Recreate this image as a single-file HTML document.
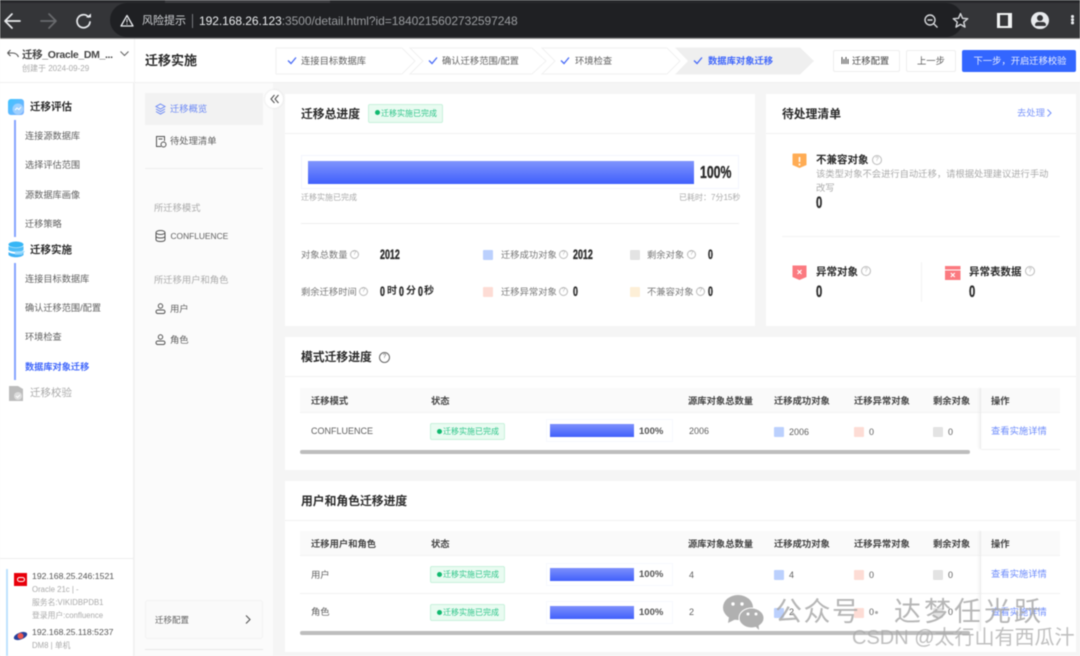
<!DOCTYPE html>
<html lang="zh"><head><meta charset="utf-8"><title>迁移实施</title>
<style>
*{box-sizing:border-box}
html,body{margin:0;padding:0;width:1080px;height:656px;overflow:hidden;background:#f5f5f5}
body{font-family:"Liberation Sans","Noto Sans CJK SC",sans-serif;font-size:9px;color:#5f5f5f}
#p{position:absolute;left:0;top:0;width:1080px;height:656px;overflow:hidden;background:#f5f5f5;filter:blur(.4px)}
.a,.t,svg.a{position:absolute}
.t{white-space:nowrap;line-height:14px}
.b{font-weight:700;color:#2a2a2a}
.g{color:#aaa}
.n{font-family:"Liberation Sans",sans-serif;font-weight:700;color:#2a2a2a;-webkit-text-stroke:.35px #2a2a2a;transform:scaleX(.66);transform-origin:0 50%}
.card{position:absolute;background:#fff}
.sq{position:absolute;width:10px;height:10px;border-radius:1px}
.q{position:absolute;width:9px;height:9px;border:1px solid #bbb;border-radius:50%;color:#aaa;font-size:6px;line-height:7px;text-align:center}
.tag{position:absolute;width:75px;height:17px;background:#e9fbf1;border:1px solid #c9f2dc;border-radius:2px;color:#2fc58a;font-size:8px;line-height:15px;padding-left:12px;white-space:nowrap}
.tag:before{content:"";position:absolute;left:6px;top:5px;width:5px;height:5px;border-radius:50%;background:#10b96f}
.bar{position:absolute;width:84px;height:13px;background:linear-gradient(#7d90fb,#4160fb)}
.fr{position:absolute;width:127px;height:23px;border:1px solid #f7f8fe}
.th{background:#fafafa;position:absolute;height:25px}
.h{font-size:9.300px;color:#444;font-weight:700}
</style></head><body><div id="p">

<!-- browser chrome -->
<div class="a" style="left:0;top:0;width:1080px;height:38px;background:#343538"></div>
<div class="a" style="left:0;top:0;width:1080px;height:3px;background:#27282b"></div>
<div class="a" style="left:165px;top:0;width:165px;height:3px;background:#3b3c3f"></div>
<div class="a" style="left:110px;top:3px;width:853px;height:34px;background:#1f2023;border-radius:17px"></div>
<div class="a" style="left:0;top:37.500px;width:1080px;height:1.200px;background:#9a9a9a"></div>
<svg class="a" style="left:0;top:3.500px" width="110" height="32" fill="none" stroke-linecap="round" stroke-linejoin="round">
<path d="M6 17h14M12 10l-7 7 7 7" stroke="#e8eaed" stroke-width="1.700"/>
<path d="M41 17h14M49 10l7 7-7 7" stroke="#686a6d" stroke-width="1.700"/>
<path d="M88.500 13a6.500 6.500 0 1 0 1.500 5" stroke="#e8eaed" stroke-width="1.700"/><path d="M86 13.500h5v-4z" fill="#e8eaed"/>
</svg>
<svg class="a" style="left:120px;top:13.500px" width="14" height="13" fill="none"><path d="M7 1.500 13 12H1z" stroke="#e8eaed" stroke-width="1.300" stroke-linejoin="round"/><path d="M7 5v3.500M7 9.500v1" stroke="#e8eaed"/></svg>
<div class="t" style="left:142px;top:13.500px;color:#d0d2d5;font-size:11px">风险提示</div>
<div class="a" style="left:192px;top:13.500px;width:1px;height:14px;background:#77797c"></div>
<div class="t" style="left:199px;top:13.500px;color:#eceef0;font-size:12px;letter-spacing:-.05px;font-weight:400">192.168.26.123<span style="color:#9a9c9f">:3500/detail.html?id=1840215602732597248</span></div>
<svg class="a" style="left:910px;top:7.500px" width="70" height="26" fill="none" stroke="#d5d7da" stroke-width="1.400" stroke-linejoin="round"><circle cx="20" cy="12" r="5"/><path d="M23.500 15.500l4 4M17.500 12h5"/><path d="M50.500 5.500l2 4.800 5.200.4-4 3.400 1.300 5-4.500-2.700-4.500 2.700 1.300-5-4-3.400 5.200-.4z"/></svg>
<div class="a" style="left:997px;top:13px;width:15px;height:15px;background:#f1f3f4"></div><div class="a" style="left:1000px;top:15px;width:8px;height:11px;background:#343538"></div>
<div class="a" style="left:1031px;top:11.500px;width:17.500px;height:17.500px;border-radius:50%;background:#e8eaed"></div>
<div class="a" style="left:1037px;top:14.500px;width:6px;height:6px;border-radius:50%;background:#343538"></div>
<div class="a" style="left:1034.500px;top:21.500px;width:11px;height:4px;border-radius:5px 5px 2px 2px;background:#343538"></div>
<div class="a" style="left:1071px;top:15px;width:2.500px;height:2.500px;border-radius:50%;background:#e8eaed;box-shadow:0 3.200px #e8eaed,0 6.400px #e8eaed"></div>

<!-- header -->
<div class="a" style="left:0;top:38.700px;width:1080px;height:44.300px;background:#fff;border-bottom:1px solid #f0f0f0"></div>
<!-- left sidebar -->
<div class="a" style="left:0;top:83px;width:134px;height:573px;background:#fff;border-right:1px solid #efefef"></div>
<div class="a" style="left:134px;top:39px;width:1px;height:44px;background:#f3f3f3"></div>
<!-- second nav -->
<div class="a" style="left:135px;top:83px;width:138px;height:573px;background:#fbfbfb"></div>

<svg class="a" style="left:6px;top:48px" width="14" height="12" fill="none" stroke="#555" stroke-width="1.100"><path d="M1.500 5h5c3 0 5 1.500 6 4M1.500 5l3-3M1.500 5l3 3"/></svg>
<div class="t b" style="left:22px;top:47.500px;font-size:10.500px;color:#444;letter-spacing:-.35px;line-height:14px">迁移_Oracle_DM_...</div>
<svg class="a" style="left:119px;top:50px" width="11" height="8" fill="none" stroke="#666" stroke-width="1.100"><path d="M1.500 1.500 5.500 5.500 9.500 1.500"/></svg>
<div class="t g" style="left:22px;top:62px;font-size:8px">创建于 2024-09-29</div>
<div class="t b" style="left:145px;top:53.500px;font-size:13px">迁移实施</div>

<!-- steps -->
<svg class="a" style="left:270px;top:46.500px" width="550" height="29">
<g fill="#fff" stroke="#f1f1f1"><path d="M6 1H132L145 14 132 27H6z"/><path d="M140 1H262L276 14 262 27H140L153 14z"/><path d="M272 1H397L410 14 397 27H272L285 14z"/></g>
<path d="M405 .5H530L544 14 530 27.500H405L418 14z" fill="#efefef"/>
<g fill="none" stroke="#4a6cf7" stroke-width="1.300"><path d="M18 13.500l3 3 5-6M159 13.500l3 3 5-6M291 13.500l3 3 5-6M424 13.500l3 3 5-6"/></g></svg>
<div class="t" style="left:301px;top:53.500px;font-size:9.300px">连接目标数据库</div>
<div class="t" style="left:442px;top:53.500px;font-size:9.300px">确认迁移范围/配置</div>
<div class="t" style="left:575px;top:53.500px;font-size:9.300px">环境检查</div>
<div class="t" style="left:708px;top:53.500px;font-size:9.300px;color:#3f66fb;font-weight:700">数据库对象迁移</div>

<div class="a" style="left:833px;top:50px;width:67px;height:21.500px;background:#fff;border:1px solid #eee;border-radius:2px"></div>
<svg class="a" style="left:841px;top:56px" width="9" height="9" stroke="#444" stroke-width="1" fill="none"><path d="M1 1v7M3 3v5M5 1v7M7 3v5"/></svg>
<div class="t" style="left:852px;top:53.500px;font-size:9.300px;color:#444">迁移配置</div>
<div class="a" style="left:906px;top:50px;width:50px;height:21.500px;background:#fff;border:1px solid #eee;border-radius:2px"></div>
<div class="t" style="left:917px;top:53.500px;font-size:9.300px">上一步</div>
<div class="a" style="left:962px;top:50px;width:114px;height:21.500px;background:#3366ff;border-radius:2px"></div>
<div class="t" style="left:973.500px;top:53.500px;font-size:9.300px;color:#e8eeff">下一步，开启迁移校验</div>

<!-- left tree -->
<div class="a" style="left:8px;top:99px;width:16px;height:16px;border-radius:3px;background:linear-gradient(135deg,#3ec3ff,#7fb0ff)"></div>
<svg class="a" style="left:8px;top:99px" width="16" height="16" fill="none"><circle cx="10" cy="10" r="5.500" fill="#b7dcff" opacity=".7"/><path d="M7 11l2-2 2 1.500 2-2.500" stroke="#fff"/></svg>
<div class="t b" style="left:30px;top:100px;font-size:10.500px">迁移评估</div>
<div class="a" style="left:14px;top:120px;width:1.500px;height:117px;background:#86a4ff"></div>
<div class="t" style="left:25px;top:129px;font-size:9.200px">连接源数据库</div>
<div class="t" style="left:25px;top:158px;font-size:9.200px">选择评估范围</div>
<div class="t" style="left:25px;top:188px;font-size:9.200px">源数据库画像</div>
<div class="t" style="left:25px;top:217px;font-size:9.200px">迁移策略</div>
<svg class="a" style="left:7px;top:241px" width="20" height="18"><ellipse cx="9" cy="3.500" rx="7.500" ry="3" fill="#35b6f6"/><path d="M1.500 5c3 2.500 12 2.500 15 0v4c-3 2.500-12 2.500-15 0z" fill="#4dbdf8"/><path d="M1.500 11c3 2.500 12 2.500 15 0v3c-3 3-12 3-15 0z" fill="#3db1f5"/><path d="M8 10h10l-3 4H8z" fill="#8fd6fc" opacity=".8"/></svg>
<div class="t b" style="left:30px;top:243px;font-size:10.500px">迁移实施</div>
<div class="a" style="left:14px;top:263px;width:1.500px;height:117px;background:#86a4ff"></div>
<div class="t" style="left:25px;top:272px;font-size:9.200px">连接目标数据库</div>
<div class="t" style="left:25px;top:301px;font-size:9.200px">确认迁移范围/配置</div>
<div class="t" style="left:25px;top:330px;font-size:9.200px">环境检查</div>
<div class="t" style="left:25px;top:360px;font-size:9.200px;color:#3f66fb;font-weight:700">数据库对象迁移</div>
<svg class="a" style="left:8px;top:385px" width="17" height="17"><path d="M1 1h9l5 3v12H1z" fill="#bcbcbc"/><circle cx="10" cy="11" r="4" fill="#dcdcdc"/><path d="M8 11l1.500 1.500L12 10" stroke="#fff" fill="none"/></svg>
<div class="t" style="left:30px;top:386px;font-size:10.500px;color:#aaa">迁移校验</div>

<div class="a" style="left:0;top:558px;width:134px;height:1px;background:#eee"></div>
<div class="a" style="left:6px;top:569px;width:2px;height:87px;background:#bfe3fd"></div>
<div class="a" style="left:14px;top:573px;width:13px;height:13px;background:#e8000b"></div>
<div class="a" style="left:16.500px;top:577px;width:8px;height:5px;border:1px solid #fff;border-radius:3px"></div>
<div class="t" style="left:32px;top:569px;font-size:8.700px;color:#555">192.168.25.246:1521</div>
<div class="t g" style="left:32px;top:583px;font-size:7.800px">Oracle 21c | -</div>
<div class="t g" style="left:32px;top:596px;font-size:7.800px">服务名:VIKIDBPDB1</div>
<div class="t g" style="left:32px;top:609px;font-size:7.800px">登录用户:confluence</div>
<svg class="a" style="left:13px;top:630px" width="15" height="12"><ellipse cx="7.500" cy="6" rx="7" ry="3.500" transform="rotate(-20 7.500 6)" fill="#27409c"/><circle cx="7.500" cy="6" r="3" fill="#e8554e"/></svg>
<div class="t" style="left:32px;top:625px;font-size:8.700px;color:#555">192.168.25.118:5237</div>
<div class="t g" style="left:32px;top:639px;font-size:7.800px">DM8 | 单机</div>

<!-- second nav items -->
<div class="a" style="left:145px;top:93px;width:118px;height:32px;background:#f2f2f2"></div>
<svg class="a" style="left:155px;top:103px" width="11" height="12" fill="none" stroke="#6c89f5"><path d="M5.500 1 10 3.500 5.500 6 1 3.500zM1 6l4.500 2.500L10 6M1 8.500 5.500 11 10 8.500"/></svg>
<div class="t" style="left:170px;top:102px;font-size:9.300px;color:#6c89f5">迁移概览</div>
<svg class="a" style="left:155px;top:135px" width="12" height="13" fill="none" stroke="#555"><path d="M9.500 6V1.500H1.500v10H6"/><path d="M3.500 4h4"/><circle cx="8.500" cy="9.500" r="2.500"/></svg>
<div class="t" style="left:170px;top:134px;font-size:9.300px">待处理清单</div>
<div class="a" style="left:145px;top:168px;width:118px;height:1px;background:#eee"></div>
<div class="t g" style="left:154px;top:201px;font-size:9.300px">所迁移模式</div>
<svg class="a" style="left:155px;top:230px" width="11" height="12" fill="none" stroke="#555"><ellipse cx="5.500" cy="2.500" rx="4.500" ry="2"/><path d="M1 2.500v7c0 2.700 9 2.700 9 0v-7M1 6c0 2.700 9 2.700 9 0"/></svg>
<div class="t" style="left:170.500px;top:229px;font-size:8.400px">CONFLUENCE</div>
<div class="t g" style="left:154px;top:273px;font-size:9.300px">所迁移用户和角色</div>
<svg class="a" style="left:155px;top:303px" width="11" height="12" fill="none" stroke="#555"><circle cx="5.500" cy="3" r="2.200"/><rect x="1" y="7" width="9" height="3.500" rx="1.700"/></svg>
<div class="t" style="left:170px;top:302px;font-size:9.300px">用户</div>
<svg class="a" style="left:155px;top:334px" width="11" height="12" fill="none" stroke="#555"><circle cx="5.500" cy="3" r="2.200"/><rect x="1" y="7" width="9" height="3.500" rx="1.700"/></svg>
<div class="t" style="left:170px;top:333px;font-size:9.300px">角色</div>
<div class="a" style="left:145px;top:600px;width:118px;height:39px;background:#fafafa;border:1px solid #f2f2f2;border-radius:3px"></div>
<div class="t" style="left:155px;top:613px;font-size:8.500px">迁移配置</div>
<svg class="a" style="left:244px;top:614px" width="8" height="11" fill="none" stroke="#555" stroke-width="1.100"><path d="M2 1.500 6 5.500 2 9.500"/></svg>
<div class="a" style="left:145px;top:649px;width:118px;height:1px;background:#e8e8e8"></div>

<!-- card 1 -->
<div class="card" style="left:285px;top:94px;width:470px;height:232px"></div>
<div class="a" style="left:285px;top:133px;width:470px;height:1px;background:#f1f1f1"></div>
<div class="t b" style="left:301px;top:107px;font-size:11.800px">迁移总进度</div>
<div class="tag" style="left:368px;top:104px;width:75px;height:19px;line-height:17px">迁移实施已完成</div>
<div class="a" style="left:301px;top:155px;width:438px;height:34px;border:1px solid #f3f5fe"></div>
<div class="a" style="left:308px;top:161px;width:386px;height:23px;background:linear-gradient(#8094fc,#3f5ffc)"></div>
<div class="t n" style="left:700px;top:165px;font-size:17.500px;transform:scaleX(.7)">100%</div>
<div class="t g" style="left:301px;top:191px;font-size:8px">迁移实施已完成</div>
<div class="t g" style="left:679px;top:191px;font-size:8px">已耗时：7分15秒</div>
<div class="a" style="left:301px;top:223px;width:438px;height:1px;background:#eee"></div>

<div class="t" style="left:301px;top:248px;font-size:9.300px;color:#777">对象总数量</div><div class="q" style="left:350px;top:250px">?</div>
<div class="t n" style="left:380px;top:248px;font-size:13.500px">2012</div>
<div class="sq" style="left:483px;top:250px;background:#bbd0fd"></div>
<div class="t" style="left:501px;top:248px;font-size:9.300px;color:#777">迁移成功对象</div><div class="q" style="left:559px;top:250px">?</div>
<div class="t n" style="left:573px;top:248px;font-size:13.500px">2012</div>
<div class="sq" style="left:630px;top:250px;background:#e3e3e3"></div>
<div class="t" style="left:647px;top:248px;font-size:9.300px;color:#777">剩余对象</div><div class="q" style="left:687px;top:250px">?</div>
<div class="t n" style="left:708px;top:248px;font-size:13.500px">0</div>

<div class="t" style="left:301px;top:285px;font-size:9.300px;color:#777">剩余迁移时间</div><div class="q" style="left:359px;top:287px">?</div>
<div class="t n" style="left:380px;top:285px;font-size:13.500px">0</div><div class="t b" style="left:387px;top:285px;font-size:10px">时</div>
<div class="t n" style="left:399px;top:285px;font-size:13.500px">0</div><div class="t b" style="left:406px;top:285px;font-size:10px">分</div>
<div class="t n" style="left:418px;top:285px;font-size:13.500px">0</div><div class="t b" style="left:424px;top:285px;font-size:10px">秒</div>
<div class="sq" style="left:483px;top:287px;background:#fddcd5"></div>
<div class="t" style="left:501px;top:285px;font-size:9.300px;color:#777">迁移异常对象</div><div class="q" style="left:559px;top:287px">?</div>
<div class="t n" style="left:573px;top:285px;font-size:13.500px">0</div>
<div class="sq" style="left:630px;top:287px;background:#fdefd7"></div>
<div class="t" style="left:647px;top:285px;font-size:9.300px;color:#777">不兼容对象</div><div class="q" style="left:696px;top:287px">?</div>
<div class="t n" style="left:708px;top:285px;font-size:13.500px">0</div>

<!-- card 2 -->
<div class="card" style="left:766px;top:94px;width:310px;height:232px"></div>
<div class="a" style="left:766px;top:133px;width:310px;height:1px;background:#f1f1f1"></div>
<div class="t b" style="left:782px;top:107px;font-size:11.800px">待处理清单</div>
<div class="t" style="left:1017px;top:106px;font-size:9.300px;color:#7c97fb">去处理</div>
<svg class="a" style="left:1046px;top:108px" width="7" height="10" fill="none" stroke="#7c97fb" stroke-width="1.100"><path d="M1.500 1.500 5 5 1.500 8.500"/></svg>
<svg class="a" style="left:792px;top:153px" width="16" height="18"><path d="M.5 1.500a1 1 0 0 1 1-1h12a1 1 0 0 1 1 1V12l-7 3-7-3z" fill="#ffac54"/><path d="M7.500 4v5M7.500 10.500v2" stroke="#fff" stroke-width="1.500"/></svg>
<div class="t b" style="left:816px;top:153px;font-size:10.500px">不兼容对象</div><div class="q" style="left:872px;top:155px;width:10px;height:10px;line-height:8px">?</div>
<div class="t g" style="left:816px;top:167px;font-size:9.300px">该类型对象不会进行自动迁移，请根据处理建议进行手动</div>
<div class="t g" style="left:816px;top:181px;font-size:9.300px">改写</div>
<div class="t n" style="left:816px;top:196px;font-size:17px">0</div>
<div class="a" style="left:782px;top:236px;width:278px;height:1px;background:#f3f3f3"></div>
<svg class="a" style="left:792px;top:265px" width="16" height="18"><path d="M.5.500h14V12l-7 3-7-3z" fill="#fb7a80"/><path d="M5.500 5l4 4M9.500 5l-4 4" stroke="#fff" stroke-width="1.200"/></svg>
<div class="t b" style="left:816px;top:265px;font-size:10.500px">异常对象</div><div class="q" style="left:861px;top:266px;width:10px;height:10px;line-height:8px">?</div>
<div class="t n" style="left:816px;top:285px;font-size:17px">0</div>
<div class="a" style="left:921px;top:262px;width:1px;height:40px;background:#f3f3f3"></div>
<svg class="a" style="left:945px;top:266px" width="16" height="15"><rect x="0" y="0" width="15.500" height="14" fill="#fb7a80"/><path d="M0 4h15.500" stroke="#fff"/><path d="M5.800 7l4 4M9.800 7l-4 4" stroke="#fff" stroke-width="1.200"/></svg>
<div class="t b" style="left:969px;top:265px;font-size:10.500px">异常表数据</div><div class="q" style="left:1025px;top:266px;width:10px;height:10px;line-height:8px">?</div>
<div class="t n" style="left:969px;top:285px;font-size:17px">0</div>

<!-- collapse button -->
<div class="a" style="left:265px;top:90px;width:18px;height:18px;border-radius:50%;background:#fff;box-shadow:0 0 2px #ddd"></div>
<svg class="a" style="left:270px;top:94px" width="10" height="10" fill="none" stroke="#555" stroke-width="1.100"><path d="M4.500 1 1 5l3.500 4M8.500 1 5 5l3.500 4"/></svg>

<!-- card 3 -->
<div class="card" style="left:285px;top:337px;width:791px;height:133px"></div>
<div class="a" style="left:285px;top:376px;width:791px;height:1px;background:#f1f1f1"></div>
<div class="t b" style="left:301px;top:350px;font-size:11.800px">模式迁移进度</div><div class="q" style="left:379px;top:352px;width:11px;height:11px;line-height:9px;border-color:#666;color:#555">?</div>
<div class="th" style="left:300px;top:388px;width:760px"></div>
<div class="a" style="left:300px;top:412px;width:760px;height:1px;background:#f3f3f3"></div>
<div class="t h" style="left:311px;top:394px">迁移模式</div>
<div class="t h" style="left:431px;top:394px">状态</div>
<div class="t h" style="left:688px;top:394px">源库对象总数量</div>
<div class="t h" style="left:774px;top:394px">迁移成功对象</div>
<div class="t h" style="left:854px;top:394px">迁移异常对象</div>
<div class="t h" style="left:933px;top:394px">剩余对象</div>
<div class="t h" style="left:991px;top:394px">操作</div>
<div class="t" style="left:311px;top:424px;font-size:9px">CONFLUENCE</div>
<div class="tag" style="left:430px;top:423px">迁移实施已完成</div>
<div class="fr" style="left:545.500px;top:419px"></div>
<div class="bar" style="left:550px;top:424px"></div>
<div class="t b" style="left:639px;top:424.500px;font-size:9.500px;color:#555">100%</div>
<div class="t" style="left:689px;top:424px;font-size:9px">2006</div>
<div class="sq" style="left:774px;top:427px;background:#bbd0fd"></div><div class="t" style="left:789px;top:425px;font-size:9px">2006</div>
<div class="sq" style="left:854px;top:427px;background:#fddcd5"></div><div class="t" style="left:869px;top:425px;font-size:9px">0</div>
<div class="sq" style="left:933px;top:427px;background:#e3e3e3"></div><div class="t" style="left:948px;top:425px;font-size:9px">0</div>
<div class="t" style="left:991px;top:424px;font-size:9.300px;color:#6c8bfb">查看实施详情</div>
<div class="a" style="left:980px;top:388px;width:1px;height:61px;background:#ececec;box-shadow:-1px 0 2px #e6e6e6"></div>
<div class="a" style="left:981px;top:449px;width:79px;height:1px;background:#f1f1f1"></div>
<div class="a" style="left:300px;top:450px;width:670px;height:4px;background:#bdbdbd;border-radius:2px"></div>

<!-- card 4 -->
<div class="card" style="left:285px;top:481px;width:791px;height:171px"></div>
<div class="t b" style="left:301px;top:494px;font-size:11.800px">用户和角色迁移进度</div>
<div class="a" style="left:285px;top:520px;width:791px;height:1px;background:#f1f1f1"></div>
<div class="th" style="left:300px;top:531px;width:760px"></div>
<div class="a" style="left:300px;top:555px;width:760px;height:1px;background:#f3f3f3"></div>
<div class="t h" style="left:311px;top:536.500px">迁移用户和角色</div>
<div class="t h" style="left:431px;top:536.500px">状态</div>
<div class="t h" style="left:688px;top:536.500px">源库对象总数量</div>
<div class="t h" style="left:774px;top:536.500px">迁移成功对象</div>
<div class="t h" style="left:854px;top:536.500px">迁移异常对象</div>
<div class="t h" style="left:933px;top:536.500px">剩余对象</div>
<div class="t h" style="left:991px;top:536.500px">操作</div>

<div class="t" style="left:311px;top:568px;font-size:9.300px">用户</div>
<div class="tag" style="left:430px;top:566px">迁移实施已完成</div>
<div class="fr" style="left:545.500px;top:563px"></div>
<div class="bar" style="left:550px;top:568px"></div>
<div class="t b" style="left:639px;top:567.500px;font-size:9.500px;color:#555">100%</div>
<div class="t" style="left:689px;top:568px;font-size:9px">4</div>
<div class="sq" style="left:774px;top:570px;background:#bbd0fd"></div><div class="t" style="left:789px;top:568px;font-size:9px">4</div>
<div class="sq" style="left:854px;top:570px;background:#fddcd5"></div><div class="t" style="left:869px;top:568px;font-size:9px">0</div>
<div class="sq" style="left:933px;top:570px;background:#e3e3e3"></div><div class="t" style="left:948px;top:568px;font-size:9px">0</div>
<div class="t" style="left:991px;top:567px;font-size:9.300px;color:#6c8bfb">查看实施详情</div>
<div class="a" style="left:300px;top:593px;width:760px;height:1px;background:#f1f1f1"></div>

<div class="t" style="left:311px;top:605px;font-size:9.300px">角色</div>
<div class="tag" style="left:430px;top:604px">迁移实施已完成</div>
<div class="fr" style="left:545.500px;top:601px"></div>
<div class="bar" style="left:550px;top:606px"></div>
<div class="t b" style="left:639px;top:605.500px;font-size:9.500px;color:#555">100%</div>
<div class="t" style="left:689px;top:605px;font-size:9px">2</div>
<div class="sq" style="left:774px;top:608px;background:#bbd0fd"></div><div class="t" style="left:789px;top:605px;font-size:9px">2</div>
<div class="sq" style="left:854px;top:608px;background:#fddcd5"></div><div class="t" style="left:869px;top:605px;font-size:9px">0</div>
<div class="a" style="left:875px;top:610.500px;width:3px;height:3px;border-radius:50%;background:#aaa"></div>
<div class="sq" style="left:933px;top:608px;background:#e3e3e3"></div><div class="t" style="left:948px;top:605px;font-size:9px">0</div>
<div class="t" style="left:991px;top:605px;font-size:9.300px;color:#6c8bfb">查看实施详情</div>
<div class="a" style="left:980px;top:531px;width:1px;height:100px;background:#ececec;box-shadow:-1px 0 2px #e6e6e6"></div>
<div class="a" style="left:300px;top:631px;width:670px;height:4px;background:#bdbdbd;border-radius:2px"></div>

<!-- watermark -->
<svg class="a" style="left:722px;top:594px" width="46" height="38"><ellipse cx="16" cy="13.500" rx="15" ry="12.500" fill="#b0b0b0"/><path d="M7 23l-1 6 8-4z" fill="#b0b0b0"/><ellipse cx="29.500" cy="24" rx="12.500" ry="10" fill="#b0b0b0" stroke="#fff"/><path d="M33 32l4 4-.5-6z" fill="#b0b0b0"/><g fill="#fff"><circle cx="11" cy="10" r="1.700"/><circle cx="20" cy="10" r="1.700"/><circle cx="26" cy="20" r="1.500"/><circle cx="34" cy="20" r="1.500"/></g></svg>
<div class="t" style="left:775px;top:597px;font-size:27px;line-height:30px;color:#aaa;opacity:.85;letter-spacing:1.500px">公众号</div>
<div class="t" style="left:894px;top:597px;font-size:27px;line-height:30px;color:#aaa;opacity:.85;letter-spacing:3px">达梦任光跃</div>
<div class="t" style="left:852px;top:627px;font-size:20px;line-height:22px;color:#aaa;opacity:.75">CSDN @太行山有西瓜汁</div>
</div></body></html>
